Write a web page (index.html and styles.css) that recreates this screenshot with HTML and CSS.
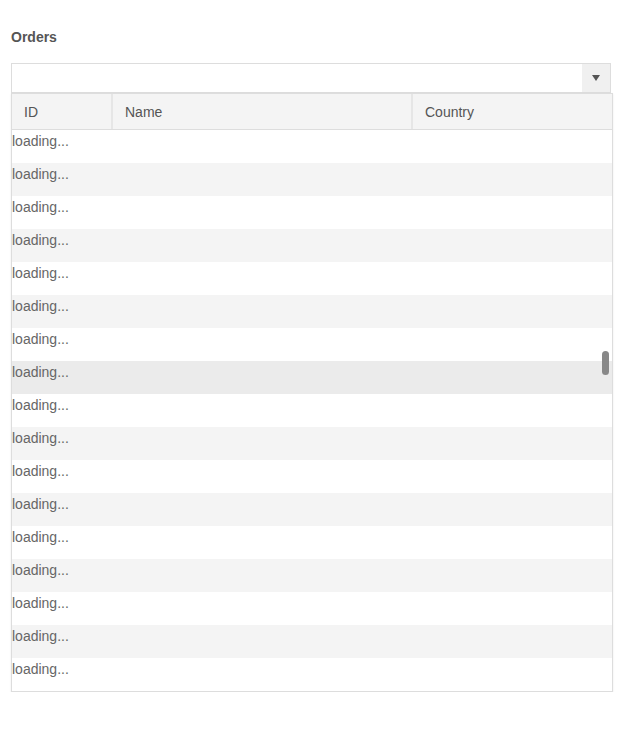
FILE: index.html
```html
<!DOCTYPE html>
<html lang="en">
<head>
  <meta charset="UTF-8">
  <title>Orders</title>
  <link rel="stylesheet" href="styles.css">
</head>
<body>
  <div class="field">
    <label class="field-label" for="orders">Orders</label>

    <div class="combo">
      <input id="orders" class="combo-input" type="text" />
      <span class="combo-button"><span class="arrow"></span></span>
    </div>

    <div class="dropdown">
      <div class="grid-head">
        <div class="col col-id">ID</div>
        <div class="col col-name">Name</div>
        <div class="col col-country">Country</div>
      </div>
      <div class="grid-body" id="grid-body"></div>
      <div class="scroll-thumb"></div>
    </div>
  </div>

  <script>
    const body = document.getElementById("grid-body");
    for (let i = 0; i < 17; i++) {
      const row = document.createElement("div");
      row.className = "row" + (i % 2 ? " alt" : "") + (i === 7 ? " hover" : "");
      row.textContent = "loading...";
      body.appendChild(row);
    }
  </script>
</body>
</html>
```

FILE: styles.css
```css
body {
  font-family: "Liberation Sans", Arial, sans-serif;
  margin: 0;
  padding: 29px 11px 0 11px;
  color: #555;
}
.field-label {
  display: block;
  font-size: 14px;
  font-weight: bold;
  line-height: 16px;
  color: #555;
}
.combo {
  position: relative;
  display: flex;
  margin-top: 18px;
  width: 600px;
  height: 30px;
  box-sizing: border-box;
  border: 1px solid #ddd;
  background: #fff;
}
.combo-input {
  flex: 1;
  border: none;
  outline: none;
  padding: 0 8px;
  font-size: 14px;
  background: transparent;
}
.combo-button {
  width: 28px;
  background: #f0f0f0;
  display: flex;
  align-items: center;
  justify-content: center;
}
.arrow {
  width: 0;
  height: 0;
  border-left: 4px solid transparent;
  border-right: 4px solid transparent;
  border-top: 6px solid #555;
}
.dropdown {
  position: relative;
  width: 602px;
  box-sizing: border-box;
  border: 1px solid #ddd;
  border-top: none;
  background: #fff;
  box-shadow: 0 1px 2px rgba(0, 0, 0, 0.08);
}
.grid-head {
  display: flex;
  height: 37px;
  background: #f4f4f4;
  border-top: 1px solid #ddd;
  border-bottom: 1px solid #ddd;
  box-sizing: border-box;
  font-size: 14px;
}
.col {
  padding: 0 12px;
  line-height: 36px;
  border-right: 2px solid #e6e6e6;
  box-sizing: border-box;
}
.col-id { width: 101px; }
.col-name { width: 300px; }
.col-country { flex: 1; border-right: none; }
.row {
  height: 33px;
  font-size: 14px;
  line-height: 22px;
  color: #666;
}
.row.alt { background: #f4f4f4; }
.row.hover { background: #ebebeb; }
.scroll-thumb {
  position: absolute;
  right: 3px;
  top: 258px;
  width: 7px;
  height: 24px;
  border-radius: 4px;
  background: #888;
}
```
